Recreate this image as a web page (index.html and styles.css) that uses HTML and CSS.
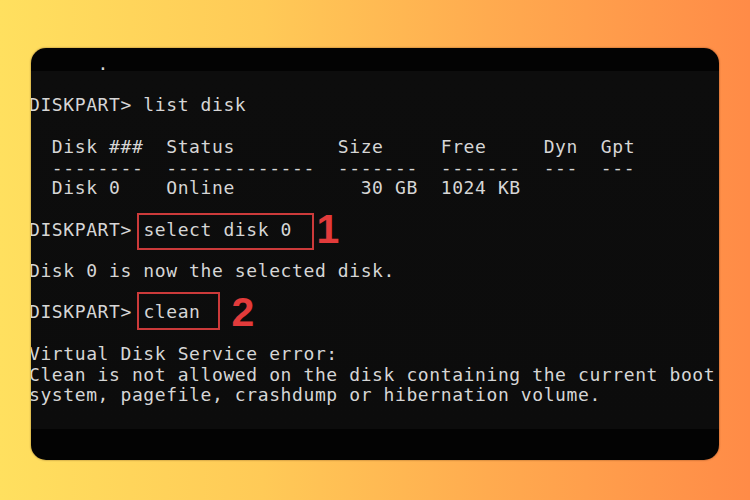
FILE: index.html
```html
<!DOCTYPE html>
<html>
<head>
  <meta charset="UTF-8" />
  <title>Diskpart clean</title>
  <link rel="stylesheet" href="styles.css">
</head>
<body>
  <div class="screen">
<pre class="console">      .

DISKPART&gt; list disk

  Disk ###  Status         Size     Free     Dyn  Gpt
  --------  -------------  -------  -------  ---  ---
  Disk 0    Online           30 GB  1024 KB

DISKPART&gt; <span class="mark mark-one">select disk 0<span class="num num-one">1</span></span>

Disk 0 is now the selected disk.

DISKPART&gt; <span class="mark mark-two">clean<span class="num num-two">2</span></span>

Virtual Disk Service error:
Clean is not allowed on the disk containing the current boot
system, pagefile, crashdump or hibernation volume.
</pre>
  </div>
</body>
</html>
```

FILE: styles.css
```css
html, body {
  margin: 0;
  padding: 0;
}
body {
  height: 500px;
  box-sizing: border-box;
  padding: 48px 0 0 31px;
  background: linear-gradient(90deg, #ffe05f 0%, #ffca57 35%, #ffab4f 65%, #ff8b47 100%);
}
.screen {
  width: 688px;
  height: 412px;
  box-sizing: border-box;
  padding-top: 6px;
  border-radius: 15px;
  overflow: hidden;
  background: linear-gradient(180deg, #030303 0, #030303 23px, #0d0d0d 23px, #0c0c0c 381px, #030303 381px);
  box-shadow: 0 0 2px rgba(60, 20, 0, 0.6);
}
.console {
  margin: 0 0 0 -2px;
  font-family: "DejaVu Sans Mono", "Liberation Mono", monospace;
  font-size: 18px;
  line-height: 20.7px;
  letter-spacing: 0.6px;
  color: #d6d6d6;
}
.mark {
  position: relative;
}
.mark::before {
  content: "";
  position: absolute;
  left: -6px;
  border: 2px solid #cc3a3a;
}
.mark-one::before {
  top: -6px;
  bottom: -10px;
  right: -22px;
}
.mark-two::before {
  top: -9px;
  bottom: -8px;
  right: -19px;
}
.num {
  position: absolute;
  font-family: "Liberation Sans", Arial, sans-serif;
  font-weight: bold;
  font-size: 41px;
  line-height: 1;
  letter-spacing: 0;
  color: #e23b3b;
}
.num-one {
  top: -10px;
  left: 173px;
}
.num-two {
  top: -9px;
  left: 88px;
}
```
